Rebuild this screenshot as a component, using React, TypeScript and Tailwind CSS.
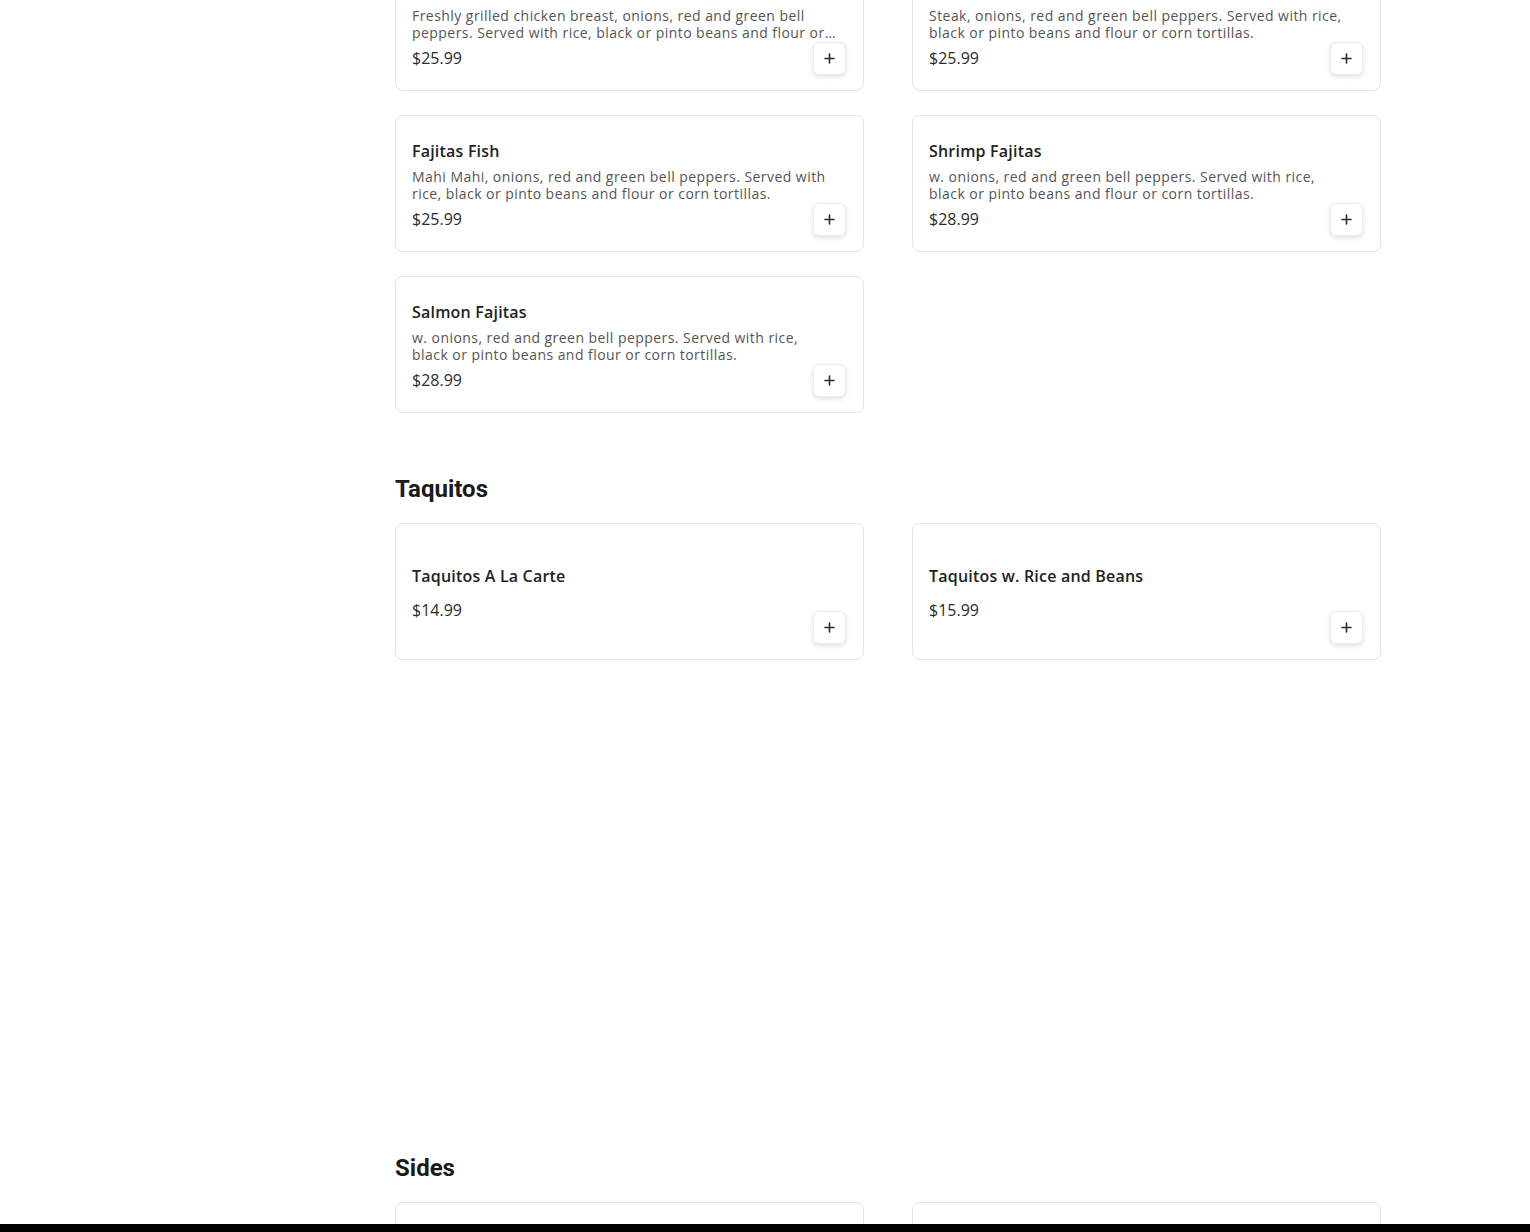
import React from "react";

type Item = { name: string; desc?: string; price: string };

const fajitas: Item[] = [
  {
    name: "Chicken Fajitas",
    desc: "Freshly grilled chicken breast, onions, red and green bell peppers. Served with rice, black or pinto beans and flour or corn tortillas.",
    price: "$25.99",
  },
  {
    name: "Steak Fajitas",
    desc: "Steak, onions, red and green bell peppers. Served with rice, black or pinto beans and flour or corn tortillas.",
    price: "$25.99",
  },
  {
    name: "Fajitas Fish",
    desc: "Mahi Mahi, onions, red and green bell peppers. Served with rice, black or pinto beans and flour or corn tortillas.",
    price: "$25.99",
  },
  {
    name: "Shrimp Fajitas",
    desc: "w. onions, red and green bell peppers. Served with rice, black or pinto beans and flour or corn tortillas.",
    price: "$28.99",
  },
  {
    name: "Salmon Fajitas",
    desc: "w. onions, red and green bell peppers. Served with rice, black or pinto beans and flour or corn tortillas.",
    price: "$28.99",
  },
];

const taquitos: Item[] = [
  { name: "Taquitos A La Carte", price: "$14.99" },
  { name: "Taquitos w. Rice and Beans", price: "$15.99" },
];

function PlusIcon() {
  return (
    <svg width="11" height="11" viewBox="0 0 11 11" fill="none">
      <path d="M5.5 1v9M1 5.5h9" stroke="#2a2a2a" strokeWidth="1.6" strokeLinecap="round" />
    </svg>
  );
}

function Card({ item }: { item: Item }) {
  return (
    <div className="relative h-[137px] rounded-lg border border-[#e3e3e3] bg-white">
      <div className="flex h-full flex-col justify-center gap-[7px] px-4 pt-[2px]">
        <div className="text-[16px] leading-[20px] font-semibold tracking-[0.2px] text-[#222222]">{item.name}</div>
        <div className="line-clamp-2 max-w-[424px] text-[14px] leading-[17px] tracking-[0.45px] text-[#555555]">
          {item.desc ?? ""}
        </div>
        <div className="text-[16px] leading-[20px] text-[#2c2c2c]">{item.price}</div>
      </div>
      <button className="absolute bottom-[15px] right-[17px] flex h-[33px] w-[33px] items-center justify-center rounded-md border border-[#ececec] bg-white shadow-[0_2px_5px_rgba(0,0,0,0.12)]">
        <PlusIcon />
      </button>
    </div>
  );
}

export default function App() {
  return (
    <div
      className="flex h-[1232px] flex-col overflow-hidden bg-white"
      style={{ fontFamily: '"Open Sans", "Liberation Sans", sans-serif' }}
    >
      <div className="flex-1 overflow-hidden">
        <div className="-mt-[46px] ml-[395px] w-[986px]">
          <div className="grid grid-cols-2 gap-x-12 gap-y-6">
            {fajitas.map((it) => (
              <Card key={it.name} item={it} />
            ))}
          </div>

          <h2
            className="mt-[60px] mb-[18px] text-[24px] leading-[32px] font-bold text-[#1a1a1a]"
            style={{ fontFamily: "Roboto, sans-serif" }}
          >
            Taquitos
          </h2>
          <div className="grid grid-cols-2 gap-x-12 gap-y-6">
            {taquitos.map((it) => (
              <Card key={it.name} item={it} />
            ))}
          </div>

          <h2
            className="mt-[492px] mb-[18px] text-[24px] leading-[32px] font-bold text-[#1a1a1a]"
            style={{ fontFamily: "Roboto, sans-serif" }}
          >
            Sides
          </h2>
          <div className="grid grid-cols-2 gap-x-12 gap-y-6">
            <div className="h-[137px] rounded-lg border border-[#e3e3e3] bg-white" />
            <div className="h-[137px] rounded-lg border border-[#e3e3e3] bg-white" />
          </div>
        </div>
      </div>
      <div className="h-2 w-full shrink-0 bg-black" />
    </div>
  );
}
